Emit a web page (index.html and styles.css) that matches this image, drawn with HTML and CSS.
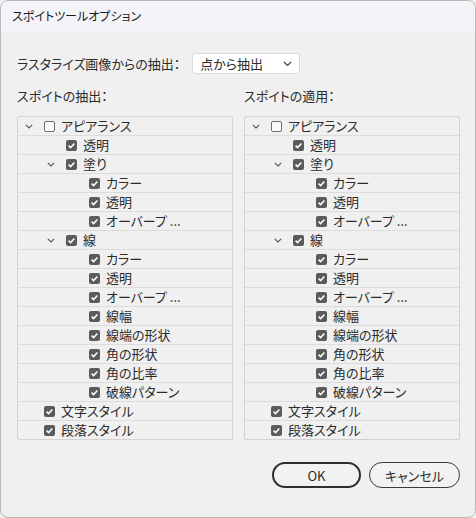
FILE: index.html
```html
<!DOCTYPE html>
<html lang="ja">
<head>
    <meta charset="UTF-8">
    <title>スポイトツールオプション</title>
    <link rel="stylesheet" href="styles.css">
</head>
<body>
    <div class="window">
        <div class="titlebar">スポイトツールオプション</div>
        <div class="content">
            <div class="raster-row">
                <span class="label">ラスタライズ画像からの抽出：</span>
                <div class="select">
                    <span>点から抽出</span>
                    <svg class="select-arrow" width="9" height="6" viewBox="0 0 9 6"><path d="M1 1l3.5 3.5L8 1" fill="none" stroke="#444" stroke-width="1.2"/></svg>
                </div>
            </div>

            <div class="columns">
                <div class="column">
                    <div class="heading">スポイトの抽出：</div>
                    <div class="tree" id="pick"></div>
                </div>
                <div class="column">
                    <div class="heading">スポイトの適用：</div>
                    <div class="tree" id="apply"></div>
                </div>
            </div>

            <div class="buttons">
                <button class="btn btn-default">OK</button>
                <button class="btn">キャンセル</button>
            </div>
        </div>
    </div>

    <script>
        // ツリーの項目: [レベル, 折りたたみ有無, チェック, ラベル]
        var items = [
            [0, true, false, 'アピアランス'],
            [1, false, true, '透明'],
            [1, true, true, '塗り'],
            [2, false, true, 'カラー'],
            [2, false, true, '透明'],
            [2, false, true, 'オーバープ ...'],
            [1, true, true, '線'],
            [2, false, true, 'カラー'],
            [2, false, true, '透明'],
            [2, false, true, 'オーバープ ...'],
            [2, false, true, '線幅'],
            [2, false, true, '線端の形状'],
            [2, false, true, '角の形状'],
            [2, false, true, '角の比率'],
            [2, false, true, '破線パターン'],
            [0, false, true, '文字スタイル'],
            [0, false, true, '段落スタイル']
        ];

        var chevron = '<svg width="8" height="5" viewBox="0 0 8 5"><path d="M0.8 0.8l3.2 3.2 3.2-3.2" fill="none" stroke="#555" stroke-width="1.1"/></svg>';
        var check = '<svg width="11" height="11" viewBox="0 0 11 11"><path d="M2.6 5.6l2 2 3.8-4.2" fill="none" stroke="#fff" stroke-width="1.5"/></svg>';

        function buildTree(el) {
            var html = '';
            items.forEach(function (it) {
                html += '<div class="row lv' + it[0] + '">'
                    + '<span class="toggle">' + (it[1] ? chevron : '') + '</span>'
                    + '<span class="cb' + (it[2] ? ' checked' : '') + '">' + (it[2] ? check : '') + '</span>'
                    + '<span class="text">' + it[3] + '</span>'
                    + '</div>';
            });
            el.innerHTML = html;
        }

        buildTree(document.getElementById('pick'));
        buildTree(document.getElementById('apply'));
    </script>
</body>
</html>
```

FILE: styles.css
```css
html, body {
    margin: 0;
    padding: 0;
}
body {
    font-family: "Noto Sans CJK JP", "Noto Sans", sans-serif;
    font-feature-settings: "palt";
    color: #2b2b2b;
    background: #f0f0f0;
}
.window {
    box-sizing: border-box;
    width: 476px;
    height: 518px;
    border: 1px solid #b9b9b9;
    border-radius: 8px;
    background: #f0f0f0;
    overflow: hidden;
}
.titlebar {
    height: 30px;
    line-height: 30px;
    padding-left: 11px;
    font-size: 12px;
    color: #1a1a1a;
    background: #f3f3f8;
}
.content {
    padding: 22px 15px 0 16px;
}
.raster-row {
    display: flex;
    align-items: center;
    height: 21px;
}
.label {
    font-size: 13px;
    margin-right: 12px;
}
.select {
    box-sizing: border-box;
    width: 108px;
    height: 21px;
    display: flex;
    align-items: center;
    justify-content: space-between;
    padding: 0 7px 0 7px;
    background: #fff;
    border: 1px solid #dadada;
    border-radius: 3px;
    font-size: 13px;
}
.columns {
    display: grid;
    grid-template-columns: 216px 216px;
    column-gap: 11px;
    margin-top: 12px;
}
.heading {
    font-size: 13px;
    height: 20px;
    line-height: 20px;
    margin-bottom: 10px;
}
.tree {
    border: 1px solid #d2d2d2;
    border-radius: 2px;
}
.row {
    box-sizing: border-box;
    height: 19px;
    display: flex;
    align-items: center;
    border-bottom: 1px solid #dcdcdc;
    font-size: 13px;
}
.row:last-child {
    border-bottom: none;
    height: 18px;
}
.row.lv0 { padding-left: 5px; }
.row.lv1 { padding-left: 27px; }
.row.lv2 { padding-left: 50px; }
.toggle {
    width: 12px;
    height: 12px;
    margin-right: 9px;
    display: flex;
    align-items: center;
    justify-content: center;
}
.cb {
    box-sizing: border-box;
    width: 11px;
    height: 11px;
    border: 1px solid #6e6e6e;
    border-radius: 2px;
    background: #fafafa;
    margin-right: 6px;
    display: flex;
}
.cb.checked {
    border: none;
    background: #5b5b5b;
}
.text {
    line-height: 18px;
    white-space: nowrap;
}
.buttons {
    display: flex;
    justify-content: flex-end;
    gap: 8px;
    margin-top: 22px;
}
.btn {
    box-sizing: border-box;
    height: 26px;
    width: 91px;
    border: 1px solid #3a3a3a;
    border-radius: 13px;
    background: #f2f2f2;
    font-family: "Noto Sans CJK JP", "Noto Sans", sans-serif;
    font-feature-settings: "palt";
    font-size: 13px;
    color: #2b2b2b;
    padding: 0;
}
.btn-default {
    width: 89px;
    border: 2px solid #2e2e2e;
}
```
